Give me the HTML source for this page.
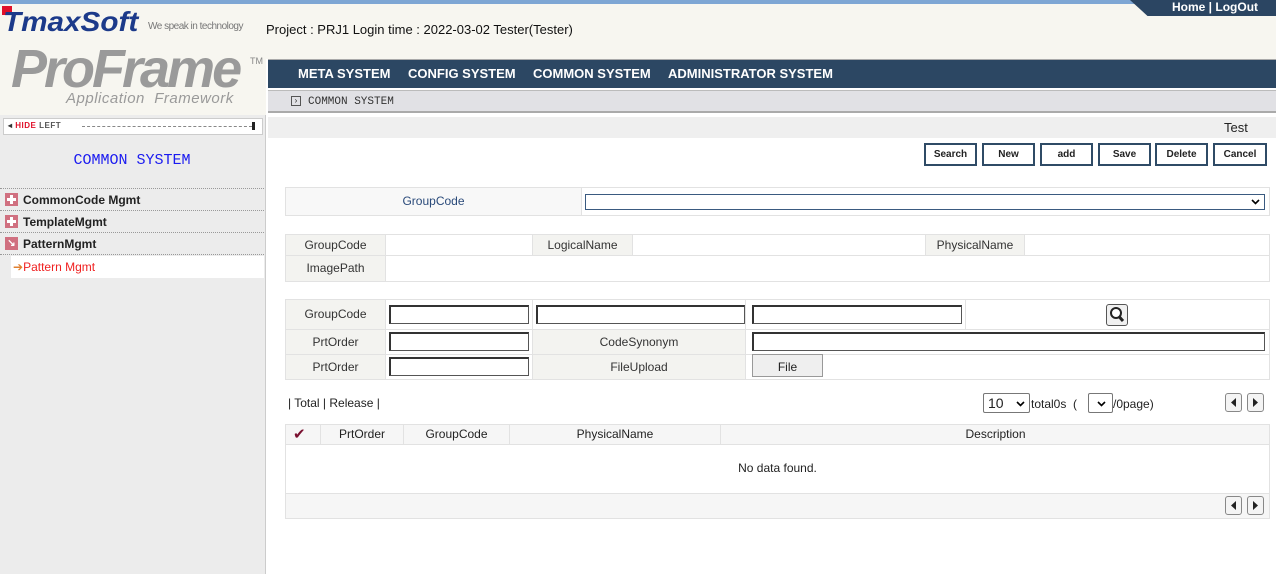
<!DOCTYPE html>
<html><head><meta charset="utf-8"><style>
*{margin:0;padding:0;box-sizing:border-box}
body{width:1276px;height:574px;position:relative;overflow:hidden;background:#fff;font-family:"Liberation Sans",Arial,sans-serif;font-size:12px;color:#222}
.a{position:absolute}
.lbl{position:absolute;background:#f3f3f0;border:1px solid #e2e2e2;text-align:center;color:#333;font-size:12px}
.cell{position:absolute;background:#fff;border:1px solid #e2e2e2}
.inp{position:absolute;border:1px solid #555;border-top:2px solid #333;border-left:2px solid #333;background:#fff;height:19px}
.btn{position:absolute;top:143px;height:23px;border:2px solid #2f4b66;background:#fff;font-size:10px;font-weight:bold;text-align:center;line-height:19px;color:#222}
.nav{position:absolute;top:66px;color:#fff;font-weight:bold;font-size:13px}
.mi{position:absolute;left:0;width:264px;height:22px;border-bottom:1px dotted #999;font-weight:bold;font-size:12px;line-height:22px;padding-left:23px}
.plus{position:absolute;left:5px;top:4px;width:13px;height:13px;background:#d07080}
.plus:before{content:"";position:absolute;left:5px;top:2px;width:3px;height:9px;background:#fff}
.plus:after{content:"";position:absolute;left:2px;top:5px;width:9px;height:3px;background:#fff}
.arr{position:absolute;width:17px;height:19px;border:1px solid #888;border-radius:3px;background:#f4f4f4}
.chev{position:absolute;width:9px;height:6px}
</style></head><body>
<div class="a" style="left:0;top:0;width:1276px;height:4px;background:#7ea6d4"></div>
<div class="a" style="left:0;top:4px;width:1276px;height:55px;background:#f7f6f0"></div>
<div class="a" style="left:0;top:4px;width:266px;height:111px;background:#f7f6f0"></div>
<div class="a" style="left:1130px;top:0;width:146px;height:16px;background:#2b4562;clip-path:polygon(0 0,100% 0,100% 100%,12% 100%)"></div>
<div class="a" style="left:1172px;top:0;color:#fff;font-weight:bold;font-size:12px">Home | LogOut</div>
<div class="a" style="left:2px;top:6px;width:10px;height:9px;background:#e0102a"></div>
<div class="a" style="left:3px;top:6px;font-size:28px;font-weight:bold;font-style:italic;color:#1c3a8a;letter-spacing:0px;line-height:32px;transform:scaleX(1.06);transform-origin:left">TmaxSoft</div>
<div class="a" style="left:148px;top:21px;font-size:10px;color:#777;letter-spacing:-0.5px">We speak in technology</div>
<div class="a" style="left:11px;top:43px;font-size:54px;font-weight:bold;font-style:italic;color:#9a9a9a;letter-spacing:-3px;line-height:52px">ProFrame</div>
<div class="a" style="left:250px;top:56px;font-size:9px;color:#888">TM</div>
<div class="a" style="left:66px;top:90px;font-size:15px;font-style:italic;color:#9a9a9a;letter-spacing:0.5px">Application&nbsp; Framework</div>
<div class="a" style="left:266px;top:22px;font-size:13px;color:#111">Project : PRJ1 Login time : 2022-03-02 Tester(Tester)</div>
<div class="a" style="left:268px;top:59px;width:1008px;height:29px;background:#2c4763;border-top:1px solid #aaa"></div>
<div class="nav" style="left:298px">META SYSTEM</div>
<div class="nav" style="left:408px">CONFIG SYSTEM</div>
<div class="nav" style="left:533px">COMMON SYSTEM</div>
<div class="nav" style="left:668px">ADMINISTRATOR SYSTEM</div>
<div class="a" style="left:268px;top:90px;width:1008px;height:23px;background:#e1e1e5;border-top:1px solid #bbb;border-bottom:2px solid #aaa"></div>
<div class="a" style="left:291px;top:96px;width:10px;height:10px;border:1px solid #555;font-size:8px;line-height:8px;text-align:center">›</div>
<div class="a" style="left:308px;top:96px;font-family:'Liberation Mono',monospace;font-size:11px;color:#333">COMMON SYSTEM</div>
<div class="a" style="left:0;top:115px;width:266px;height:459px;background:#ececec;border-right:1px solid #ccc"></div>
<div class="a" style="left:3px;top:118px;width:260px;height:17px;background:#fff;border:1px solid #ccc"></div>
<div class="a" style="left:8px;top:121px;font-size:8px;font-weight:bold;letter-spacing:0.5px"><span style="color:#333">◂ </span><span style="color:#e0102a">HIDE</span> <span style="color:#555">LEFT</span></div>
<div class="a" style="left:82px;top:126px;width:170px;border-top:1px dashed #888"></div>
<div class="a" style="left:252px;top:122px;width:3px;height:8px;background:#222"></div>
<div class="a" style="left:0;top:152px;width:264px;text-align:center;font-family:'Liberation Mono',monospace;font-size:15px;color:#1a1af0">COMMON SYSTEM</div>
<div class="a" style="left:0;top:188px;width:264px;border-top:1px dotted #999"></div>
<div class="mi" style="top:189px"><span class="plus"></span>CommonCode Mgmt</div>
<div class="mi" style="top:211px"><span class="plus"></span>TemplateMgmt</div>
<div class="mi" style="top:233px"><span class="a" style="left:5px;top:4px;width:13px;height:13px;background:#d07080;color:#fff;font-size:10px;line-height:13px;text-align:center">↘</span>PatternMgmt</div>
<div class="a" style="left:11px;top:256px;width:253px;height:22px;background:#fff;color:#f02020;font-size:12px;line-height:22px;padding-left:2px"><span style="color:#e08030">➔</span>Pattern Mgmt</div>
<div class="a" style="left:268px;top:117px;width:1008px;height:21px;background:#efefef"></div>
<div class="a" style="left:1224px;top:120px;font-size:13px">Test</div>
<div class="btn" style="left:924px;width:53px">Search</div>
<div class="btn" style="left:982px;width:53px">New</div>
<div class="btn" style="left:1040px;width:53px">add</div>
<div class="btn" style="left:1098px;width:53px">Save</div>
<div class="btn" style="left:1155px;width:53px">Delete</div>
<div class="btn" style="left:1213px;width:54px">Cancel</div>
<div class="lbl" style="left:285px;top:187px;width:297px;height:29px;line-height:27px;background:#f8f8f8;color:#2a4a7a">GroupCode</div>
<div class="cell" style="left:581px;top:187px;width:689px;height:29px"></div>
<div class="a" style="left:585px;top:194px;width:680px;height:16px;border:1px solid #3a5a80;background:#fff"><svg class="chev" style="right:4px;top:4px" viewBox="0 0 9 6"><path d="M1 1L4.5 4.5L8 1" stroke="#000" stroke-width="1.6" fill="none"/></svg></div>
<div class="lbl" style="left:285px;top:234px;width:101px;height:22px;line-height:20px">GroupCode</div>
<div class="cell" style="left:385px;top:234px;width:148px;height:22px"></div>
<div class="lbl" style="left:532px;top:234px;width:101px;height:22px;line-height:20px">LogicalName</div>
<div class="cell" style="left:632px;top:234px;width:294px;height:22px"></div>
<div class="lbl" style="left:925px;top:234px;width:100px;height:22px;line-height:20px">PhysicalName</div>
<div class="cell" style="left:1024px;top:234px;width:246px;height:22px"></div>
<div class="lbl" style="left:285px;top:255px;width:101px;height:27px;line-height:25px">ImagePath</div>
<div class="cell" style="left:385px;top:255px;width:885px;height:27px"></div>
<div class="lbl" style="left:285px;top:299px;width:101px;height:31px;line-height:29px">GroupCode</div>
<div class="cell" style="left:385px;top:299px;width:148px;height:31px"></div>
<div class="cell" style="left:532px;top:299px;width:214px;height:31px"></div>
<div class="cell" style="left:745px;top:299px;width:221px;height:31px"></div>
<div class="cell" style="left:965px;top:299px;width:305px;height:31px"></div>
<div class="lbl" style="left:285px;top:329px;width:101px;height:26px;line-height:24px">PrtOrder</div>
<div class="cell" style="left:385px;top:329px;width:148px;height:26px"></div>
<div class="lbl" style="left:532px;top:329px;width:214px;height:26px;line-height:24px">CodeSynonym</div>
<div class="cell" style="left:745px;top:329px;width:525px;height:26px"></div>
<div class="lbl" style="left:285px;top:354px;width:101px;height:26px;line-height:24px">PrtOrder</div>
<div class="cell" style="left:385px;top:354px;width:148px;height:26px"></div>
<div class="lbl" style="left:532px;top:354px;width:214px;height:26px;line-height:24px">FileUpload</div>
<div class="cell" style="left:745px;top:354px;width:525px;height:26px"></div>
<div class="inp" style="left:389px;top:305px;width:140px"></div>
<div class="inp" style="left:536px;top:305px;width:209px"></div>
<div class="inp" style="left:752px;top:305px;width:210px"></div>
<div class="a" style="left:1106px;top:304px;width:22px;height:22px;border:1px solid #555;border-radius:3px;background:#f0f0f0"><svg width="20" height="20" viewBox="0 0 20 20"><circle cx="9" cy="8" r="5" stroke="#222" stroke-width="2" fill="#fff"/><path d="M12 11.5L16 16" stroke="#222" stroke-width="3"/></svg></div>
<div class="inp" style="left:389px;top:332px;width:140px"></div>
<div class="inp" style="left:752px;top:332px;width:513px"></div>
<div class="inp" style="left:389px;top:357px;width:140px"></div>
<div class="a" style="left:752px;top:354px;width:71px;height:23px;border:1px solid #999;background:#efefef;text-align:center;line-height:24px">File</div>
<div class="a" style="left:288px;top:396px;font-size:12px">| Total | Release |</div>
<div class="a" style="left:983px;top:393px;width:47px;height:20px;border:1px solid #777;border-radius:2px;font-size:14px;padding-left:4px;line-height:18px">10<svg class="chev" style="right:4px;top:7px" viewBox="0 0 9 6"><path d="M1 1L4.5 4.5L8 1" stroke="#000" stroke-width="1.6" fill="none"/></svg></div>
<div class="a" style="left:1031px;top:397px">total0s &nbsp;(</div>
<div class="a" style="left:1088px;top:393px;width:25px;height:20px;border:1px solid #777;border-radius:2px"><svg class="chev" style="left:8px;top:7px" viewBox="0 0 9 6"><path d="M1 1L4.5 4.5L8 1" stroke="#000" stroke-width="1.6" fill="none"/></svg></div>
<div class="a" style="left:1113px;top:397px">/0page)</div>
<div class="arr" style="left:1225px;top:393px"><svg width="15" height="17"><path d="M10 4L5 8.5L10 13Z" fill="#222"/></svg></div><div class="arr" style="left:1247px;top:393px"><svg width="15" height="17"><path d="M5 4L10 8.5L5 13Z" fill="#222"/></svg></div>
<div class="a" style="left:285px;top:424px;width:985px;height:95px;border:1px solid #e2e2e2;background:#fff"></div>
<div class="a" style="left:285px;top:424px;width:985px;height:21px;background:#f6f6f6;border:1px solid #e2e2e2"></div>
<div class="a" style="left:293px;top:426px;width:17px;height:17px;color:#7a1030;font-size:15px;line-height:17px">✔</div>
<div class="a" style="left:320px;top:424px;width:84px;height:21px;border-left:1px solid #e2e2e2;border-right:1px solid #e2e2e2;text-align:center;line-height:20px">PrtOrder</div>
<div class="a" style="left:404px;top:424px;width:106px;height:21px;border-right:1px solid #e2e2e2;text-align:center;line-height:20px">GroupCode</div>
<div class="a" style="left:510px;top:424px;width:211px;height:21px;border-right:1px solid #e2e2e2;text-align:center;line-height:20px">PhysicalName</div>
<div class="a" style="left:721px;top:424px;width:549px;height:21px;text-align:center;line-height:20px">Description</div>
<div class="a" style="left:285px;top:461px;width:985px;text-align:center">No data found.</div>
<div class="a" style="left:285px;top:493px;width:985px;height:26px;background:#f6f6f6;border:1px solid #e2e2e2"></div>
<div class="arr" style="left:1225px;top:496px"><svg width="15" height="17"><path d="M10 4L5 8.5L10 13Z" fill="#222"/></svg></div><div class="arr" style="left:1247px;top:496px"><svg width="15" height="17"><path d="M5 4L10 8.5L5 13Z" fill="#222"/></svg></div>
</body></html>
